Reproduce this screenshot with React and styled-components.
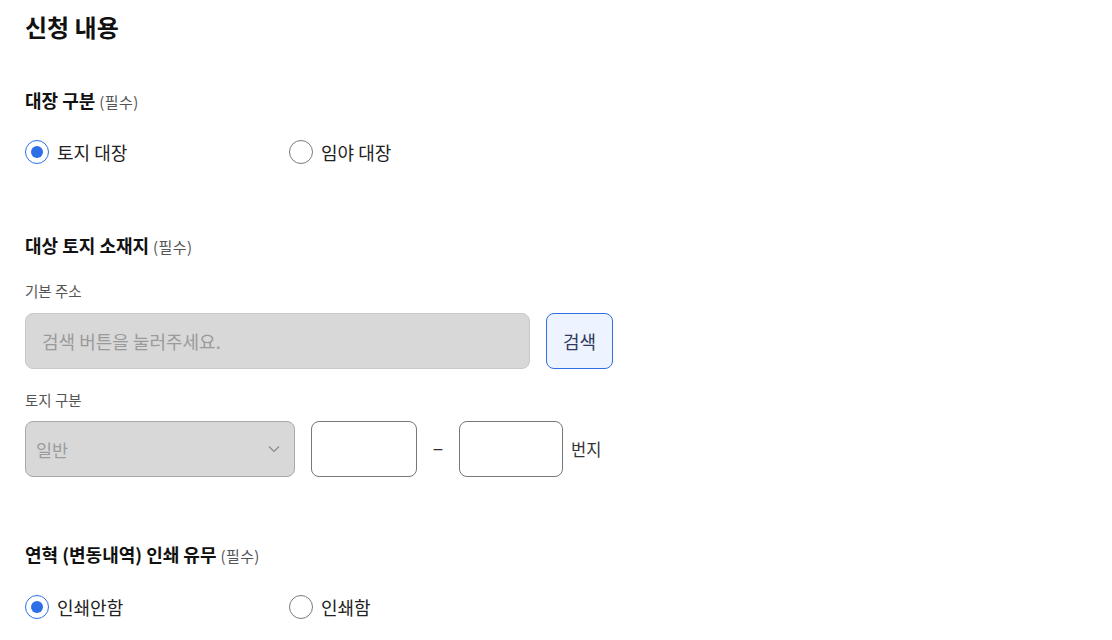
import React, { useState } from 'react'
import styled, { createGlobalStyle } from 'styled-components';

const GlobalStyle = createGlobalStyle`
  body {
    margin: 0;
    background: #fff;
    font-family: "Noto Sans CJK KR", "Noto Sans", sans-serif;
    color: #1a1a1a;
  }
`;

const Page = styled.div`
  padding: 10px 25px 0;
  width: 600px;
`;

const Title = styled.h2`
  margin: 0;
  height: 34px;
  font-size: 24px;
  line-height: 34px;
  font-weight: 700;
  color: #111;
`;

const SectionLabel = styled.h3`
  display: flex;
  align-items: baseline;
  height: 24px;
  margin: ${(p) => p.$top}px 0 0;
  font-size: 18px;
  line-height: 24px;
  font-weight: 700;
  color: #111;
`;

const Required = styled.span`
  font-size: 15px;
  letter-spacing: 0.4px;
  font-weight: 400;
  color: #555;
  margin-left: 4px;
`;

const RadioRow = styled.div`
  display: flex;
  height: 24px;
  margin-top: ${(p) => p.$top}px;
`;

const RadioOption = styled.label`
  display: flex;
  align-items: center;
  gap: 8px;
  width: 264px;
  height: 24px;
  font-size: 18px;
  color: #222;
  cursor: pointer;
`;

const RadioCircle = styled.span`
  box-sizing: border-box;
  flex: none;
  width: 24px;
  height: 24px;
  border-radius: 50%;
  border: 1.5px solid ${(p) => (p.$checked ? '#2c6fe6' : '#7a7a7a')};
  display: flex;
  align-items: center;
  justify-content: center;
  &::after {
    content: '';
    width: 12px;
    height: 12px;
    border-radius: 50%;
    background: ${(p) => (p.$checked ? '#2c6fe6' : 'transparent')};
  }
`;

const FieldLabel = styled.div`
  margin-top: ${(p) => p.$top}px;
  height: 20px;
  font-size: 14.5px;
  line-height: 20px;
  color: #555;
`;

const FieldRow = styled.div`
  display: flex;
  align-items: center;
  margin-top: ${(p) => p.$top}px;
  height: 56px;
`;

const AddressInput = styled.input`
  box-sizing: border-box;
  width: 505px;
  height: 56px;
  border: 1px solid #c9c9c9;
  border-radius: 8px;
  background: #d8d8d8;
  padding: 0 16px;
  font-family: inherit;
  font-size: 18px;
  &::placeholder { color: #9a9a9a; }
`;

const SearchButton = styled.button`
  box-sizing: border-box;
  margin-left: 16px;
  width: 67px;
  height: 56px;
  border: 1px solid #2e6fe3;
  border-radius: 8px;
  background: #eef4ff;
  color: #2f3a5e;
  font-family: inherit;
  font-size: 18px;
  cursor: pointer;
`;

const Select = styled.div`
  box-sizing: border-box;
  width: 270px;
  height: 56px;
  border: 1px solid #a8a8a8;
  border-radius: 8px;
  background: #d8d8d8;
  display: flex;
  align-items: center;
  justify-content: space-between;
  padding: 0 14px 0 10px;
  font-size: 17.5px;
  color: #9c9c9c;
`;

const NumberInput = styled.input`
  box-sizing: border-box;
  width: ${(p) => p.$w}px;
  height: 56px;
  margin-left: ${(p) => p.$ml || 0}px;
  border: 1px solid #777;
  border-radius: 8px;
  background: #fff;
  font-family: inherit;
  font-size: 16px;
  padding: 0 10px;
`;

const Dash = styled.span`
  width: 42px;
  text-align: center;
  font-family: "Liberation Sans", sans-serif;
  font-size: 16px;
  color: #333;
`;

const Suffix = styled.span`
  margin-left: 8px;
  font-size: 16.5px;
  color: #333;
`;

function Radio({ checked, label, onClick }) {
  return (
    <RadioOption onClick={onClick}>
      <RadioCircle $checked={checked} />
      {label}
    </RadioOption>
  );
}

export default function App() {
  const [ledger, setLedger] = useState('land');
  const [print, setPrint] = useState('no');

  return (
    <Page>
      <GlobalStyle />
      <Title>신청 내용</Title>

      <SectionLabel $top={44}>대장 구분<Required>(필수)</Required></SectionLabel>
      <RadioRow $top={28}>
        <Radio checked={ledger === 'land'} label="토지 대장" onClick={() => setLedger('land')} />
        <Radio checked={ledger === 'forest'} label="임야 대장" onClick={() => setLedger('forest')} />
      </RadioRow>

      <SectionLabel $top={69}>대상 토지 소재지<Required>(필수)</Required></SectionLabel>
      <FieldLabel $top={24}>기본 주소</FieldLabel>
      <FieldRow $top={12}>
        <AddressInput placeholder="검색 버튼을 눌러주세요." disabled />
        <SearchButton>검색</SearchButton>
      </FieldRow>

      <FieldLabel $top={21}>토지 구분</FieldLabel>
      <FieldRow $top={11}>
        <Select>
          일반
          <svg width="12" height="8" viewBox="0 0 12 8" fill="none">
            <path d="M1 1.5l5 5 5-5" stroke="#8a8a8a" strokeWidth="1.2" />
          </svg>
        </Select>
        <NumberInput $w={106} $ml={16} />
        <Dash>–</Dash>
        <NumberInput $w={104} />
        <Suffix>번지</Suffix>
      </FieldRow>

      <SectionLabel $top={65}>연혁 (변동내역) 인쇄 유무<Required>(필수)</Required></SectionLabel>
      <RadioRow $top={29}>
        <Radio checked={print === 'no'} label="인쇄안함" onClick={() => setPrint('no')} />
        <Radio checked={print === 'yes'} label="인쇄함" onClick={() => setPrint('yes')} />
      </RadioRow>
    </Page>
  );
}
